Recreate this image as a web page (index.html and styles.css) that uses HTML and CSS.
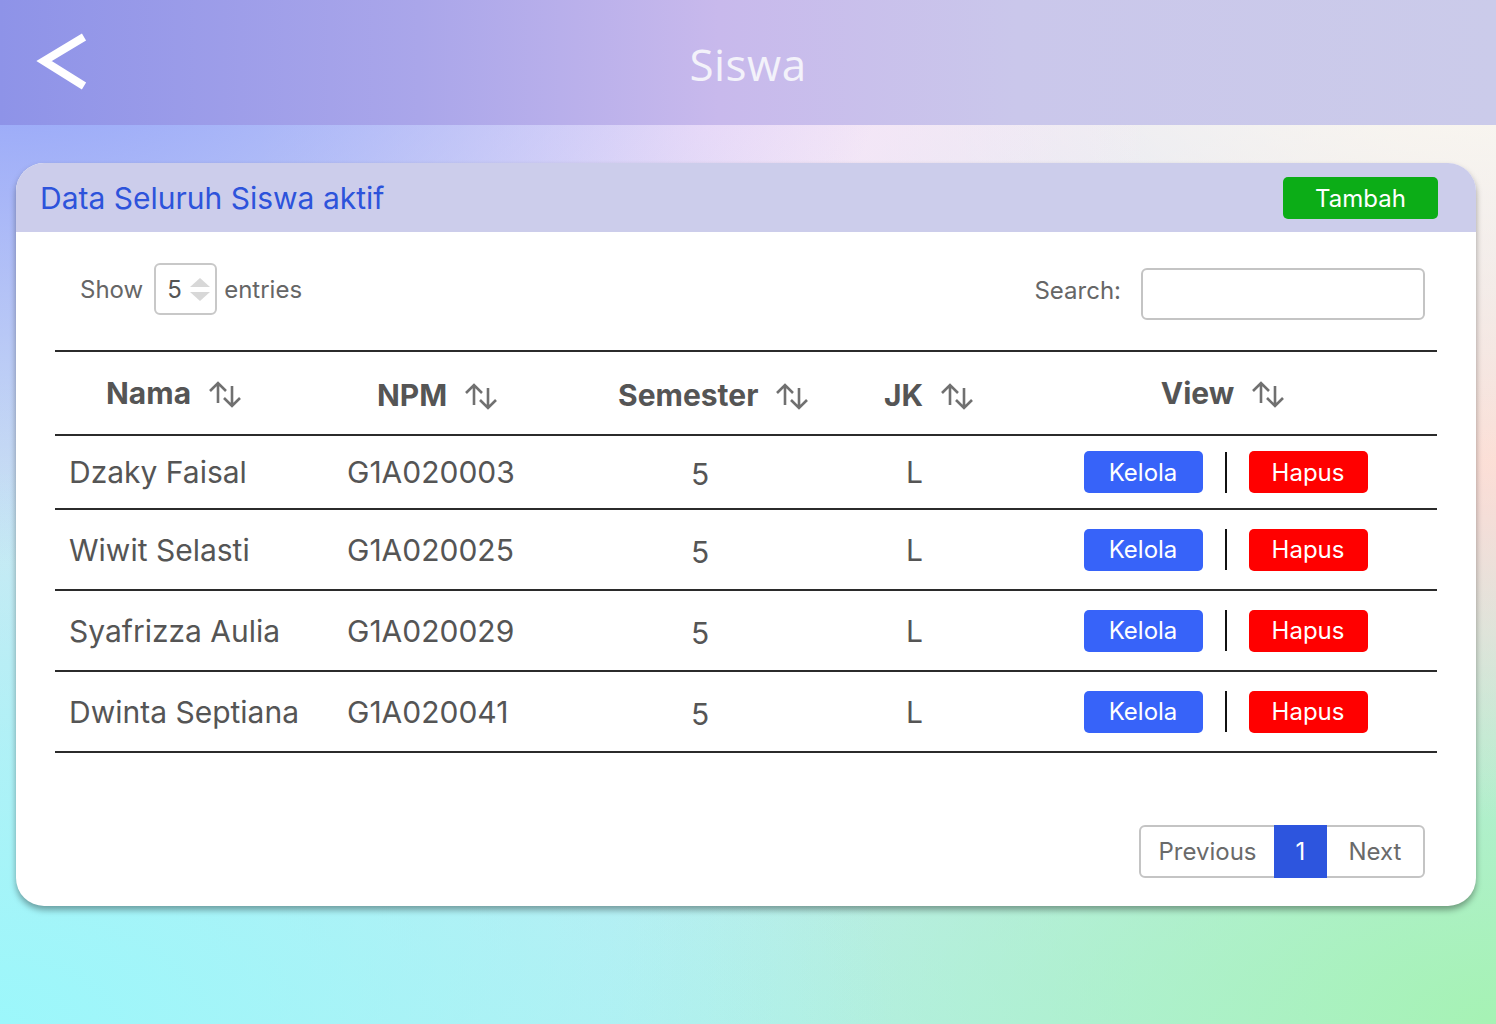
FILE: index.html
```html
<!DOCTYPE html>
<html lang="id">
<head>
<meta charset="utf-8">
<title>Siswa</title>
<link rel="stylesheet" href="styles.css">
</head>
<body>
<div class="page">
  <header class="topbar">
    <a class="back" href="#" aria-label="Kembali">
      <svg width="60" height="60" viewBox="0 0 60 60"><polyline points="50,4 10,28 50,53" fill="none" stroke="#ffffff" stroke-width="8" stroke-linejoin="miter" stroke-linecap="butt"/></svg>
    </a>
    <h1 class="title">Siswa</h1>
  </header>

  <section class="card">
    <div class="card-head">
      <h2 class="card-title">Data Seluruh Siswa aktif</h2>
      <button class="btn btn-green">Tambah</button>
    </div>
    <div class="card-body">
      <div class="controls">
        <div class="show">
          <span>Show</span>
          <div class="select"><span>5</span><span class="spin"><i class="up"></i><i class="down"></i></span></div>
          <span class="entries">entries</span>
        </div>
        <div class="search">
          <span>Search:</span>
          <div class="input"></div>
        </div>
      </div>

      <div class="table">
        <div class="row head">
          <div class="c c1"><span>Nama</span><svg class="sort" viewBox="0 0 36 28"><path d="M11 3V23M3 11L11 3L19 11M25 6V26M17 18L25 26L33 18" fill="none" stroke="#707070" stroke-width="2.6"/></svg></div>
          <div class="c c2"><span>NPM</span><svg class="sort" viewBox="0 0 36 28"><path d="M11 3V23M3 11L11 3L19 11M25 6V26M17 18L25 26L33 18" fill="none" stroke="#707070" stroke-width="2.6"/></svg></div>
          <div class="c c3"><span>Semester</span><svg class="sort" viewBox="0 0 36 28"><path d="M11 3V23M3 11L11 3L19 11M25 6V26M17 18L25 26L33 18" fill="none" stroke="#707070" stroke-width="2.6"/></svg></div>
          <div class="c c4"><span>JK</span><svg class="sort" viewBox="0 0 36 28"><path d="M11 3V23M3 11L11 3L19 11M25 6V26M17 18L25 26L33 18" fill="none" stroke="#707070" stroke-width="2.6"/></svg></div>
          <div class="c c5"><span>View</span><svg class="sort" viewBox="0 0 36 28"><path d="M11 3V23M3 11L11 3L19 11M25 6V26M17 18L25 26L33 18" fill="none" stroke="#707070" stroke-width="2.6"/></svg></div>
        </div>

        <div class="row body first">
          <div class="c c1">Dzaky Faisal</div>
          <div class="c c2">G1A020003</div>
          <div class="c c3">5</div>
          <div class="c c4">L</div>
          <div class="c c5"><button class="btn btn-blue">Kelola</button><span class="sep"></span><button class="btn btn-red">Hapus</button></div>
        </div>
        <div class="row body">
          <div class="c c1">Wiwit Selasti</div>
          <div class="c c2">G1A020025</div>
          <div class="c c3">5</div>
          <div class="c c4">L</div>
          <div class="c c5"><button class="btn btn-blue">Kelola</button><span class="sep"></span><button class="btn btn-red">Hapus</button></div>
        </div>
        <div class="row body">
          <div class="c c1">Syafrizza Aulia</div>
          <div class="c c2">G1A020029</div>
          <div class="c c3">5</div>
          <div class="c c4">L</div>
          <div class="c c5"><button class="btn btn-blue">Kelola</button><span class="sep"></span><button class="btn btn-red">Hapus</button></div>
        </div>
        <div class="row body">
          <div class="c c1">Dwinta Septiana</div>
          <div class="c c2">G1A020041</div>
          <div class="c c3">5</div>
          <div class="c c4">L</div>
          <div class="c c5"><button class="btn btn-blue">Kelola</button><span class="sep"></span><button class="btn btn-red">Hapus</button></div>
        </div>
      </div>

      <div class="pager">
        <div class="pages">
          <span class="pg prev">Previous</span>
          <span class="pg active">1</span>
          <span class="pg next">Next</span>
        </div>
      </div>
    </div>
  </section>
</div>
</body>
</html>
```

FILE: styles.css
```css
* { box-sizing: border-box; }
html, body { margin: 0; padding: 0; }
body {
  width: 1496px;
  height: 1024px;
  overflow: hidden;
  font-family: Inter, "Liberation Sans", sans-serif;
  background:
    radial-gradient(ellipse 60% 55% at 0% 0%, #8b9ef9 0%, rgba(139,158,249,0) 100%),
    radial-gradient(ellipse 30% 25% at 47% 12%, #fbe6f8 0%, rgba(251,230,248,0) 100%),
    radial-gradient(ellipse 55% 50% at 100% 0%, #fffbee 0%, rgba(255,251,238,0) 100%),
    radial-gradient(ellipse 45% 35% at 100% 45%, #fcdcd4 0%, rgba(252,220,212,0) 100%),
    radial-gradient(ellipse 60% 55% at 0% 100%, #9cf7fb 0%, rgba(156,247,251,0) 100%),
    radial-gradient(ellipse 60% 55% at 100% 100%, #a6f2b4 0%, rgba(166,242,180,0) 100%),
    linear-gradient(180deg, #e6e0f6 0%, #b8eef0 100%);
}
.page { width: 1496px; height: 1024px; }

.topbar {
  height: 125px;
  position: relative;
  display: flex;
  align-items: center;
  justify-content: center;
  background: linear-gradient(90deg, #8e93e8 0%, #aaa6ea 28%, #c8b9ec 48%, #cac7eb 68%, #cbcbea 100%);
}
.back {
  position: absolute;
  left: 34px;
  top: 33px;
  display: block;
  width: 60px;
  height: 60px;
}
.title {
  margin: 0;
  font-family: "Open Sans", "Noto Sans", sans-serif;
  font-weight: 400;
  font-size: 44px;
  color: #f3f2fa;
  letter-spacing: 0.5px;
  transform: translateY(1px);
}

.card {
  margin: 38px 20px 0 16px;
  height: 743px;
  background: #ffffff;
  border-radius: 28px;
  overflow: hidden;
  box-shadow: 0 4px 6px rgba(0, 0, 0, 0.35);
}
.card-head {
  height: 69px;
  background: #cccdeb;
  display: flex;
  align-items: center;
  justify-content: space-between;
  padding: 0 38px 0 24px;
}
.card-title {
  margin: 0;
  font-weight: 400;
  font-size: 30px;
  color: #2d53db;
}
.btn {
  border: none;
  font-family: Inter, "Liberation Sans", sans-serif;
  color: #ffffff;
  font-size: 24px;
  border-radius: 5px;
  padding: 0;
  cursor: pointer;
}
.btn-green {
  width: 155px;
  height: 42px;
  background: #0cad17;
  margin-top: 1px;
}

.card-body { padding: 0 39px; }

.controls {
  height: 118px;
  display: flex;
  align-items: center;
  justify-content: space-between;
  padding: 0 12px 0 25px;
  color: #666666;
  font-size: 24px;
}
.show { display: flex; align-items: center; margin-top: -4px; }
.select {
  margin: 0 7px 0 11px;
  width: 63px;
  height: 52px;
  border: 2px solid #c8c8c8;
  border-radius: 6px;
  display: flex;
  align-items: center;
  padding-left: 11px;
  gap: 8px;
  color: #555;
}
.spin { display: flex; flex-direction: column; gap: 5px; }
.spin i {
  display: block;
  width: 0;
  height: 0;
  border-left: 10px solid transparent;
  border-right: 10px solid transparent;
}
.spin .up { border-bottom: 9px solid #d8d8d8; }
.spin .down { border-top: 9px solid #d8d8d8; }
.search { display: flex; align-items: center; gap: 20px; margin-top: 6px; }
.search span { margin-top: -8px; }
.input {
  width: 284px;
  height: 52px;
  border: 2px solid #c4c4c4;
  border-radius: 6px;
}

.table { border-top: 2px solid #2b2b2b; }
.row {
  display: grid;
  grid-template-columns: 275px 245px 265px 170px 427px;
  align-items: center;
  border-bottom: 2px solid #2b2b2b;
}
.row.head { height: 84px; }
.row.body { height: 81px; font-size: 30px; color: #555555; }
.row.body.first { height: 74px; }
.c { display: flex; align-items: center; }
.head .c { font-weight: 700; font-size: 30px; color: #555555; }
.sort { width: 36px; height: 28px; margin-left: 16px; margin-top: 2px; }
.head .c1 { padding-left: 51px; }
.head .c2 { padding-left: 47px; margin-top: 4px; }
.head .c3 { padding-left: 43px; margin-top: 4px; }
.head .c4 { padding-left: 44px; margin-top: 4px; }
.head .c5 { justify-content: center; }

.body .c1 { padding-left: 14px; }
.body .c2 { padding-left: 17px; }
.body .c3 { padding-left: 116px; margin-top: 4px; }
.body .c4 { padding-left: 66px; }
.body .c5 { justify-content: center; padding-left: 4px; }

.btn-blue { width: 119px; height: 42px; background: #3763f9; }
.btn-red { width: 119px; height: 42px; background: #ff0000; }
.sep {
  width: 2px;
  height: 41px;
  background: #111;
  margin: 0 22px;
}

.pager {
  display: flex;
  justify-content: flex-end;
  padding: 72px 12px 0 0;
}
.pages {
  display: flex;
  height: 53px;
  border: 2px solid #c4c4c4;
  border-radius: 6px;
  font-size: 24px;
  color: #6a6a6a;
}
.pg { display: flex; align-items: center; justify-content: center; }
.prev { width: 133px; }
.active { width: 53px; background: #2d55de; color: #ffffff; margin: -2px 0; }
.next { width: 96px; }
```
